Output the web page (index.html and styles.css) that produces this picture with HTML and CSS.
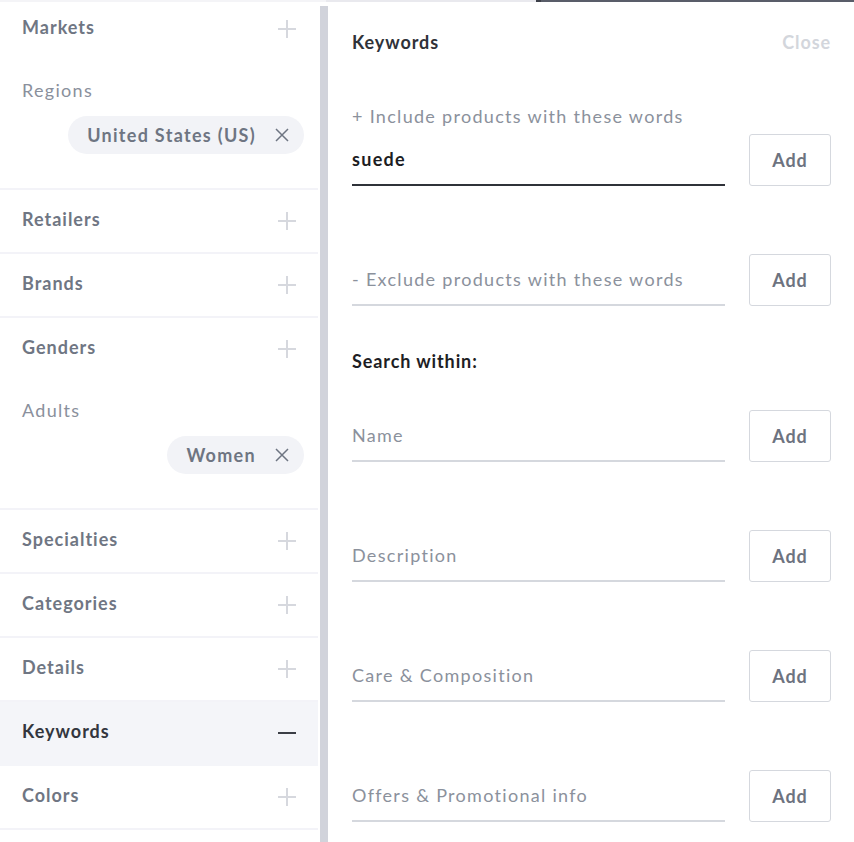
FILE: index.html
```html
<!DOCTYPE html>
<html lang="en">

<head>
    <meta charset="UTF-8">
    <meta name="viewport" content="width=device-width, initial-scale=1.0">
    <title>Filters - Keywords</title>
    <link rel="stylesheet" href="styles.css">
</head>

<body>
    <div class="topbar">
        <span class="seg seg-light"></span>
        <span class="seg seg-mid"></span>
        <span class="seg seg-edge"></span>
        <span class="seg seg-dark"></span>
    </div>

    <div class="layout">
        <aside class="sidebar">
            <div class="filter first">
                <div class="filter-head">
                    <span>Markets</span>
                    <span class="toggle plus"></span>
                </div>
                <div class="filter-body">
                    <div class="sub-label">Regions</div>
                    <div class="chips">
                        <span class="chip">United States (US)
                            <svg width="14" height="14" viewBox="0 0 14 14"><path d="M1 1 L13 13 M13 1 L1 13" /></svg>
                        </span>
                    </div>
                </div>
            </div>
            <div class="filter">
                <div class="filter-head"><span>Retailers</span><span class="toggle plus"></span></div>
            </div>
            <div class="filter">
                <div class="filter-head"><span>Brands</span><span class="toggle plus"></span></div>
            </div>
            <div class="filter">
                <div class="filter-head">
                    <span>Genders</span>
                    <span class="toggle plus"></span>
                </div>
                <div class="filter-body">
                    <div class="sub-label">Adults</div>
                    <div class="chips">
                        <span class="chip">Women
                            <svg width="14" height="14" viewBox="0 0 14 14"><path d="M1 1 L13 13 M13 1 L1 13" /></svg>
                        </span>
                    </div>
                </div>
            </div>
            <div class="filter">
                <div class="filter-head"><span>Specialties</span><span class="toggle plus"></span></div>
            </div>
            <div class="filter">
                <div class="filter-head"><span>Categories</span><span class="toggle plus"></span></div>
            </div>
            <div class="filter">
                <div class="filter-head"><span>Details</span><span class="toggle plus"></span></div>
            </div>
            <div class="filter active">
                <div class="filter-head"><span>Keywords</span><span class="toggle minus"></span></div>
            </div>
            <div class="filter">
                <div class="filter-head"><span>Colors</span><span class="toggle plus"></span></div>
            </div>
        </aside>

        <div class="scrollbar"><div class="thumb"></div></div>

        <section class="panel">
            <div class="panel-head">
                <h2>Keywords</h2>
                <span class="close">Close</span>
            </div>

            <div class="field-row include">
                <div class="field active">
                    <label for="include">+ Include products with these words</label>
                    <input type="text" id="include" value="suede">
                </div>
                <button class="add">Add</button>
            </div>

            <div class="field-row">
                <div class="field">
                    <input type="text" placeholder="- Exclude products with these words">
                </div>
                <button class="add">Add</button>
            </div>

            <h3>Search within:</h3>

            <div class="field-row first-within">
                <div class="field"><input type="text" placeholder="Name"></div>
                <button class="add">Add</button>
            </div>
            <div class="field-row">
                <div class="field"><input type="text" placeholder="Description"></div>
                <button class="add">Add</button>
            </div>
            <div class="field-row">
                <div class="field"><input type="text" placeholder="Care &amp; Composition"></div>
                <button class="add">Add</button>
            </div>
            <div class="field-row">
                <div class="field"><input type="text" placeholder="Offers &amp; Promotional info"></div>
                <button class="add">Add</button>
            </div>
        </section>
    </div>
</body>

</html>
```

FILE: styles.css
```css
body {
    margin: 0;
    padding: 0;
    font-family: Lato, "Open Sans", sans-serif;
    font-size: 18px;
    letter-spacing: 1.3px;
    background-color: #fff;
    overflow: hidden;
}

.topbar {
    display: flex;
    height: 2px;
}

.seg-light {
    width: 326px;
    background-color: #f4f4f7;
}

.seg-mid {
    width: 210px;
    background-color: #e9e9ee;
}

.seg-edge {
    width: 5px;
    background-color: #3d4049;
}

.seg-dark {
    flex: 1;
    background-color: #595d69;
}

.layout {
    display: flex;
    height: 840px;
    overflow: hidden;
}

/* sidebar */

.sidebar {
    width: 318px;
    flex-shrink: 0;
}

.filter {
    border-bottom: 2px solid #f3f3f8;
}

.filter.first {
    margin-top: -4px;
}

.filter-head {
    height: 62px;
    box-sizing: border-box;
    display: flex;
    align-items: center;
    justify-content: space-between;
    padding: 0 22px 4px;
    font-weight: 700;
    letter-spacing: 1px;
    color: #6f7683;
}

.filter.active {
    background-color: #f4f5f9;
    border-bottom-color: #f4f5f9;
}

.filter.active .filter-head {
    color: #33363e;
}

.toggle {
    position: relative;
    width: 18px;
    height: 18px;
    margin-top: 4px;
}

.toggle::before,
.toggle::after {
    content: "";
    position: absolute;
    background-color: #d6d8de;
}

.toggle::before {
    left: 0;
    right: 0;
    top: 8px;
    height: 1.5px;
}

.toggle.plus::after {
    top: 0;
    bottom: 0;
    left: 8px;
    width: 1.5px;
}

.toggle.minus::before {
    background-color: #3b3e46;
    height: 2px;
}

.filter-body {
    padding: 20px 14px 34px 22px;
}

.sub-label {
    line-height: 20px;
    color: #8a909c;
}

.chips {
    display: flex;
    justify-content: flex-end;
    margin-top: 16px;
}

.chip {
    display: flex;
    align-items: center;
    gap: 19px;
    height: 38px;
    padding: 0 15px 0 19px;
    border-radius: 19px;
    background-color: #f2f3f7;
    color: #6e7582;
    font-weight: 700;
}

.chip svg path {
    stroke: #6e7582;
    stroke-width: 1.5;
    fill: none;
}

.scrollbar {
    width: 10px;
    flex-shrink: 0;
    padding: 4px 0 0 2px;
    box-sizing: border-box;
}

.thumb {
    width: 8px;
    height: 100%;
    background-color: #d1d3db;
}

/* keywords panel */

.panel {
    flex: 1;
    padding: 30px 23px 0 24px;
}

.panel-head {
    display: flex;
    justify-content: space-between;
    line-height: 20px;
    font-weight: 700;
    letter-spacing: 0.9px;
}

.panel-head h2 {
    margin: 0;
    font-size: 18px;
    color: #2f3239;
}

.close {
    color: #d3d6dc;
}

.field-row {
    display: flex;
    align-items: flex-end;
    gap: 24px;
    margin-top: 68px;
}

.field-row.include {
    margin-top: 54px;
}

.field-row.first-within {
    margin-top: 39px;
}

.field {
    flex: 1;
    display: flex;
    flex-direction: column;
}

.field label {
    line-height: 20px;
    color: #8b919c;
    margin-bottom: 12px;
}

.field input {
    height: 41px;
    padding: 0 0 5px 0;
    border: none;
    border-bottom: 2px solid #d5d8de;
    box-sizing: content-box;
    font-family: inherit;
    font-size: 18px;
    letter-spacing: 1.3px;
    color: #1c1d22;
    font-weight: 700;
    outline: none;
}

.field input::placeholder {
    color: #8b919c;
    font-weight: 400;
}

.field.active input {
    border-bottom-color: #2f3239;
}

h3 {
    margin: 45px 0 0;
    font-size: 18px;
    line-height: 20px;
    font-weight: 700;
    letter-spacing: 0.9px;
    color: #1e1e24;
}

button.add {
    width: 82px;
    height: 52px;
    flex-shrink: 0;
    border: 1px solid #d5d8de;
    border-radius: 3px;
    background-color: #fff;
    font-family: inherit;
    font-size: 18px;
    letter-spacing: 0.9px;
    font-weight: 700;
    color: #6d7380;
}
```
